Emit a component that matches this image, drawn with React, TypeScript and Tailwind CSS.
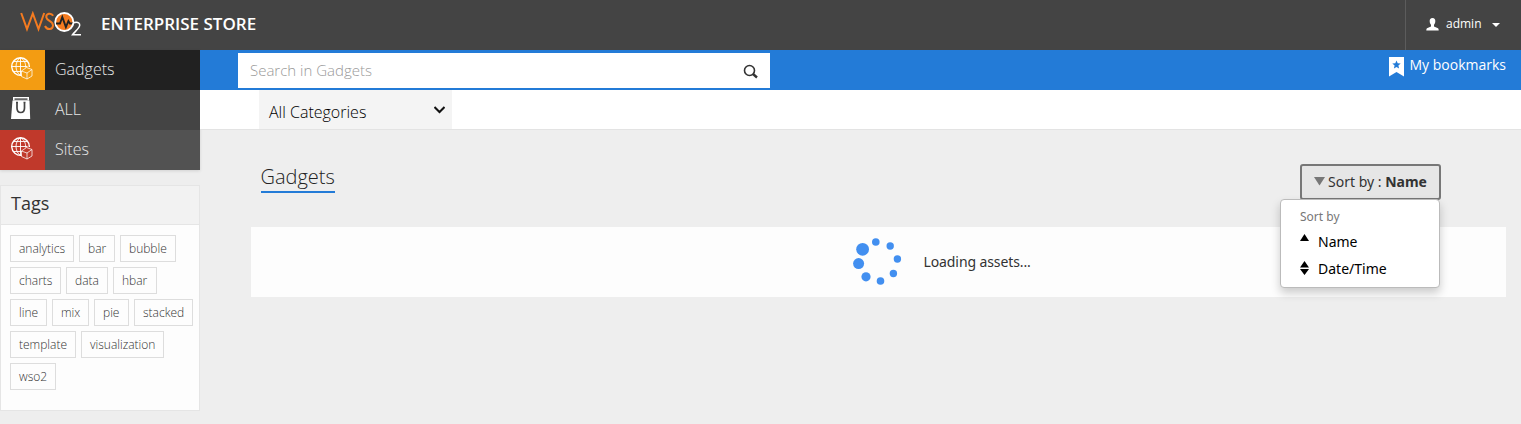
import React from "react";

const OS = "font-['Open_Sans','Noto_Sans',sans-serif]";
const NS = "font-['Noto_Sans','Open_Sans',sans-serif]";

function Logo() {
  return (
    <svg width="64" height="30" viewBox="0 0 64 30" fill="none">
      <path d="M1.200 2L7 18l5.800-15.500L18.500 18 24.200 2" stroke="#f47b20" strokeWidth="2" />
      <path d="M33.200 4.800C31 1.200 25.800 2.600 26.300 6.400c.5 3.600 6.800 3.600 6.700 8-.1 4.400-6 5-8 .6" stroke="#f47b20" strokeWidth="2" />
      <circle cx="44.300" cy="11" r="9" fill="#f47b20" stroke="#fff" strokeWidth="1.900" />
      <path d="M36 12.500h4l2.300-6.500 3.600 10 2.500-6 1.500 2.500h3" stroke="#222" strokeWidth="1.900" />
      <path d="M52.500 14.300c.5-4.300 7.500-4 7.200 0-.2 3-4.700 6-7.200 9.500h8.500" stroke="#fff" strokeWidth="1.500" />
    </svg>
  );
}

function Globe() {
  return (
    <svg width="22" height="23" viewBox="0 0 22 23" fill="none" stroke="#fff">
      <path d="M10.500 18.300A8.800 8.800 0 1 1 18.300 10" strokeWidth="1.400" />
      <path d="M9.500 .5v17.500M.5 9.500h16M2.500 4.500h14M2.500 14.500h8M9.500 .5c-6 4-6 14 0 18M9.500 .5c4 2.500 5.300 6 5.200 10" strokeWidth="1" opacity=".9" />
      <path d="M10.500 14l5-3.500 5.500 2v6.500l-5 3-5.500-2.500zM10.500 14l5.500 2 5-3.500M16 16v6" strokeWidth="1" opacity=".75" />
    </svg>
  );
}

function Bag() {
  return (
    <svg width="20" height="23" viewBox="0 0 20 23">
      <path d="M2 0h16v3.500H2z" fill="#fff" />
      <path d="M3.500 1.400h13v1.400h-13z" fill="#444" />
      <path d="M1.500 3.500h17l.7 18.500H0z" fill="#fff" />
      <path d="M6 5.500v5.500c0 6 7.500 6 7.500 0V5.500M5 5.500h2M12.500 5.500h2" fill="none" stroke="#444" strokeWidth="1.700" />
    </svg>
  );
}

function NavItem({ label, icon, box, row }: { label: string; icon: React.ReactNode; box: string; row: string }) {
  return (
    <a className={`flex h-10 ${row}`}>
      <span className={`w-[45px] pl-[11px] pt-[7px] ${box}`}>{icon}</span>
      <span className="pl-[10px] text-[16px] font-light leading-[38px] text-[#e6e6e6]">{label}</span>
    </a>
  );
}

const tagRows: [string, string][][] = [
  [["analytics", "w-16"], ["bar", "w-9"], ["bubble", "w-14"]],
  [["charts", "w-[51px]"], ["data", "w-[42px]"], ["hbar", "w-11"]],
  [["line", "w-[37px]"], ["mix", "w-[37px]"], ["pie", "w-[35px]"], ["stacked", "w-[59px]"]],
  [["template", "w-[66px]"], ["visualization", "w-[83px]"]],
  [["wso2", "w-[46px]"]],
];

// Loader dots as [cx, cy, radius]
const dots = [
  [9.6, 11.3, 6.4], [22.8, 4, 3.8], [37.2, 8, 3.7], [44.4, 21, 3.7],
  [40.4, 35.5, 3.7], [27.5, 43, 3.8], [13, 38.8, 4.6], [5.6, 25.6, 5.5],
];

export default function App() {
  return (
    <div className={`h-[424px] w-[1521px] overflow-hidden bg-[#eee] ${OS}`}>
      <header className="flex h-[50px] justify-between bg-[#444] text-white">
        <div className="flex pl-5">
          <div className="w-[81px] pt-[11px]"><Logo /></div>
          <h1 className="text-[17px] font-semibold leading-[48px]">ENTERPRISE STORE</h1>
        </div>
        <div className="flex w-[116px] border-l border-[#5c5c5c] pl-5">
          <svg className="mt-[18px]" width="13" height="13" viewBox="0 0 13 13" fill="#fff"><path d="M6.500 0c2 0 3 1.500 2.800 3.500-.1 1.700-.8 2.700-1.300 3.300v1.700l4 1.700q.7.500.7 2.300H.3q0-1.800.7-2.300l4-1.700V6.800C4.500 6.200 3.800 5.200 3.700 3.500 3.500 1.500 4.500 0 6.500 0z" /></svg>
          <span className="ml-[7px] w-[46px] text-[12px] leading-[47px]">admin</span>
          <svg className="mt-[23px]" width="8" height="4"><path d="M0 0h8L4 4z" fill="#fff" /></svg>
        </div>
      </header>
      <div className="flex">
        <aside className="w-[200px]">
          <nav className="shadow-[0_1px_3px_rgba(0,0,0,0.12)]">
            <NavItem label="Gadgets" icon={<Globe />} box="bg-[#f39c12]" row="bg-[#212121]" />
            <NavItem label="ALL" icon={<Bag />} box="bg-[#444]" row="bg-[#444]" />
            <NavItem label="Sites" icon={<Globe />} box="bg-[#c0392b]" row="bg-[#525252]" />
          </nav>
          <section className="mt-[15px] h-[226px] border border-[#e5e5e5] bg-[#fdfdfd]">
            <h2 className="h-[39px] border-b border-[#e5e5e5] bg-[#f2f2f2] pl-[10px] text-[18px] leading-[35px] text-[#333]">Tags</h2>
            <div className="flex flex-col gap-[5px] pl-[9px] pt-[10px]">
              {tagRows.map((r, i) => (
                <div key={i} className="flex gap-[5px]">
                  {r.map(([t, w]) => (
                    <span key={t} className={`h-[27px] shrink-0 whitespace-nowrap border border-[#ddd] pl-2 text-[12px] font-light leading-[25px] text-[#333] ${w}`}>{t}</span>
                  ))}
                </div>
              ))}
            </div>
          </section>
        </aside>
        <main className="flex-1">
          <div className="flex h-10 justify-between bg-[#237bd7] pl-[38px] pr-[15px] pt-[3px]">
            <div className="flex h-[35px] w-[532px] justify-between bg-white pl-3 pr-3">
              <span className="text-[15px] font-light leading-[35px] text-[#999]">Search in Gadgets</span>
              <svg className="mt-[11px]" width="15" height="15" fill="none" stroke="#333"><circle cx="6.500" cy="6.500" r="5" strokeWidth="1.600" /><path d="M10 10l4 3.500" strokeWidth="2.400" /></svg>
            </div>
            <div className="flex text-white">
              <svg className="mt-[4px]" width="15" height="20" viewBox="0 0 15 20"><path d="M0 0h15v19.500L7.500 15 0 19.500z" fill="#fff" /><path d="M7.500 3.500l1.200 2.800 3 .2-2.300 2 .7 3-2.600-1.600-2.600 1.600.7-3-2.300-2 3-.2z" fill="#237bd7" /></svg>
              <span className="ml-[6px] -mr-px text-[14px] leading-[24px]">My bookmarks</span>
              <span className="w-px" />
            </div>
          </div>
          <div className="h-10 border-b border-[#e3e3e3] bg-white pl-[59px]">
            <div className="flex h-[39px] w-[193px] justify-between bg-[#f4f4f4] pl-[10px] pr-[7px]">
              <span className="text-[16px] font-light leading-[44px] text-black">All Categories</span>
              <svg className="mt-[16px]" width="11" height="8" fill="none" stroke="#111" strokeWidth="2"><path d="M.5 1L5.500 6l5-5" /></svg>
            </div>
          </div>
          <div className="pl-[51px] pr-[15px]">
            <div className="flex h-[97px] justify-between pl-[9.500px] pr-[65px] pt-[34px]">
              <h2 className="h-[29px] border-b-2 border-[#237bd7] text-[20px] font-light leading-[25px] text-[#222]">Gadgets</h2>
              <div className="relative h-9">
                <button className={`flex h-9 w-[141px] items-center rounded-[3px] border-2 border-[#777] bg-[#e6e6e6] pb-[2px] pl-3 text-[14px] text-[#333] ${NS}`}>
                  <svg className="mr-[3px]" width="11" height="9"><path d="M0 0h11L5.500 8.500z" fill="#777" /></svg>
                  <span className="whitespace-nowrap">Sort by : <b className="font-bold">Name</b></span>
                </button>
                <div className={`absolute -left-5 top-[35px] h-[89px] w-[160px] rounded-[4px] border border-[#bbb] bg-white pl-[19px] text-black shadow-[0_5px_10px_rgba(0,0,0,0.2)] ${NS}`}>
                  <div className="pt-[4px] text-[12px] leading-[26px] text-[#777]">Sort by</div>
                  <div className="-mt-px flex h-[27px] text-[14px] leading-[26px]"><svg className="mr-[9px] mt-[5px]" width="9" height="7"><path d="M4.500 0L9 7H0z" /></svg>Name</div>
                  <div className="flex h-[27px] text-[14px] leading-[26px]"><svg className="mr-[9px] mt-[5px]" width="9" height="15"><path d="M4.500 0L9 6.500H0zM0 8h9l-4.500 6z" /></svg>Date/Time</div>
                </div>
              </div>
            </div>
            <div className="flex h-[70px] bg-[#fdfdfd] pl-[602px]">
              <svg className="mt-[11px]" width="50" height="50" fill="#428ff0">{dots.map(([x, y, r], i) => <circle key={i} cx={x} cy={y} r={r} />)}</svg>
              <span className={`ml-[20.500px] text-[14px] leading-[70px] tracking-[-0.1px] text-[#333] ${NS}`}>Loading assets...</span>
            </div>
          </div>
        </main>
      </div>
    </div>
  );
}
